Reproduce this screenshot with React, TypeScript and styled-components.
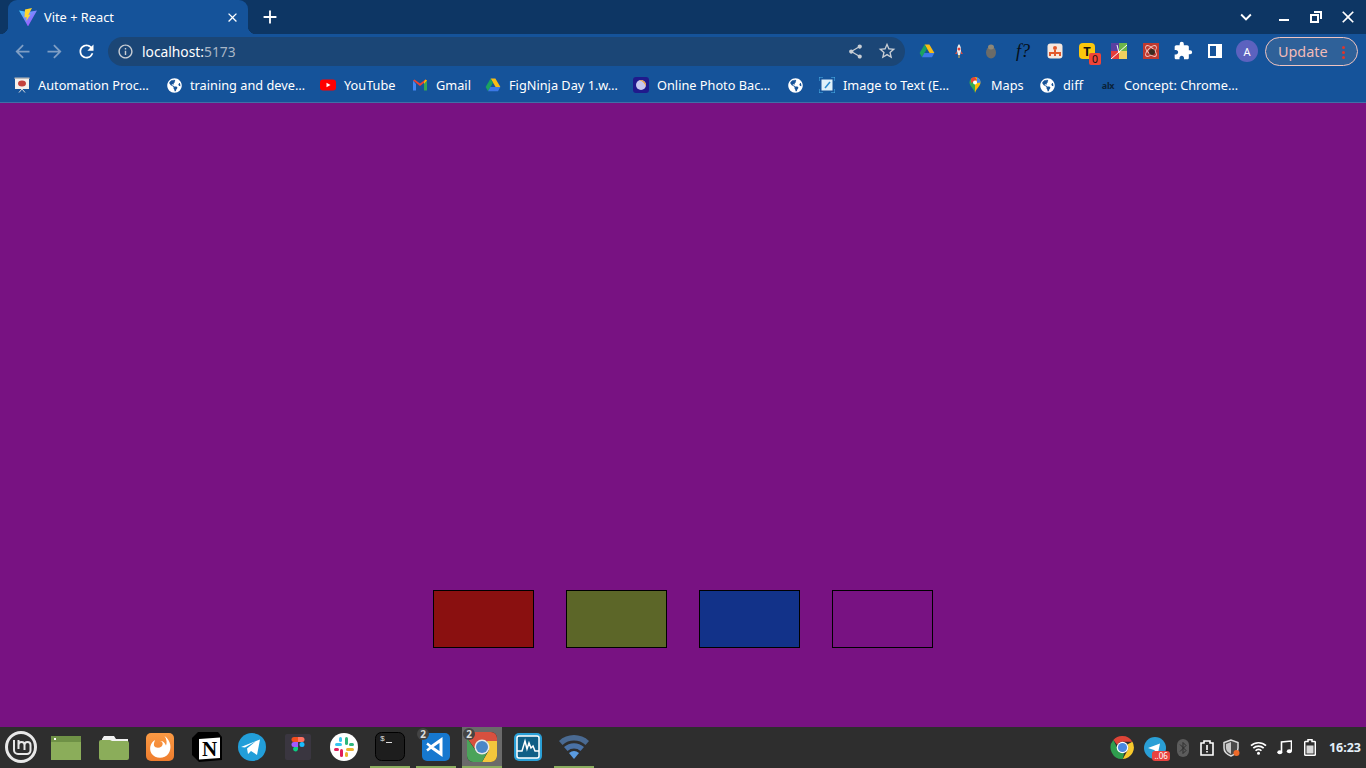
import React from 'react';
import styled, { createGlobalStyle } from 'styled-components';
import {
  MdAdd, MdArrowBack, MdArrowForward, MdClose, MdExpandMore, MdExtension,
  MdInfoOutline, MdRefresh, MdShare, MdStarBorder,
} from 'react-icons/md';
import { FaGlobeAmericas } from 'react-icons/fa';

const GlobalStyle = createGlobalStyle`
  html, body { margin: 0; padding: 0; height: 100%; overflow: hidden; }
  #root { height: 100%; }
`;

const Screen = styled.div`
  display: flex;
  flex-direction: column;
  width: 1366px;
  height: 768px;
  font-family: "Noto Sans", sans-serif;
  background: #781282;
`;

const TabStrip = styled.div`
  display: flex;
  align-items: flex-end;
  flex: 0 0 34px;
  padding-left: 8px;
  background: #0d3664;
`;

const Tab = styled.div`
  position: relative;
  display: flex;
  align-items: center;
  width: 240px;
  height: 34px;
  box-sizing: border-box;
  padding: 0 8px 0 11px;
  gap: 7px;
  background: #15539a;
  border-radius: 9px 9px 0 0;
  color: #fff;
  font-size: 12.8px;

  &::before, &::after {
    content: "";
    position: absolute;
    bottom: 0;
    width: 8px;
    height: 8px;
  }
  &::before { left: -8px; background: radial-gradient(circle at 0 0, transparent 8px, #15539a 8.5px); }
  &::after { right: -8px; background: radial-gradient(circle at 100% 0, transparent 8px, #15539a 8.5px); }
`;

const TabTitle = styled.span`
  flex: 1;
`;

const NewTab = styled.div`
  display: flex;
  align-items: center;
  justify-content: center;
  width: 28px;
  height: 34px;
  margin-left: 8px;
  color: #fff;
  font-size: 22px;
`;

const WindowButtons = styled.div`
  display: flex;
  align-items: center;
  height: 34px;
  margin-left: auto;
  padding-right: 2px;
  color: #fff;
`;

const WindowButton = styled.div<{ $gap?: number }>`
  display: flex;
  align-items: center;
  justify-content: center;
  width: 32px;
  height: 34px;
  margin-right: ${p => p.$gap ?? 0}px;
`;

const Toolbar = styled.div`
  display: flex;
  align-items: center;
  flex: 0 0 34px;
  padding: 0 8px 0 6px;
  background: #15539a;
`;

const NavButton = styled.div<{ $dim?: boolean }>`
  display: flex;
  align-items: center;
  justify-content: center;
  width: 32px;
  height: 32px;
  font-size: 21px;
  color: ${p => (p.$dim ? '#7f9ec4' : '#fff')};
`;

const Omnibox = styled.div`
  display: flex;
  align-items: center;
  width: 797px;
  height: 29px;
  margin-left: 6px;
  padding: 0 2px 0 9px;
  box-sizing: border-box;
  border-radius: 15px;
  background: #1b4676;
  color: #a9b6c6;
  font-size: 13.8px;
`;

const Url = styled.span`
  margin-left: 8px;
  flex: 1;
  span { color: #fff; }
`;

const OmniAction = styled.div`
  display: flex;
  align-items: center;
  justify-content: center;
  width: 32px;
  color: #c9ced4;
  font-size: 17px;
`;

const Extensions = styled.div`
  display: flex;
  align-items: center;
  margin-left: 6px;
`;

const ExtSlot = styled.div`
  position: relative;
  display: flex;
  align-items: center;
  justify-content: center;
  width: 32px;
  height: 32px;
  color: #fff;
  font-size: 20px;
`;

const FormulaIcon = styled.span`
  font-family: "Liberation Serif", serif;
  font-style: italic;
  font-size: 18px;
  color: #050f18;
`;

const TamperIcon = styled.div`
  display: flex;
  align-items: center;
  justify-content: center;
  width: 16px;
  height: 16px;
  border-radius: 4px;
  background: #fbc70d;
  color: #111;
  font-size: 13px;
  font-weight: 700;
`;

const TamperBadge = styled.span`
  position: absolute;
  right: 2px;
  bottom: 2px;
  width: 12px;
  height: 12px;
  border-radius: 2px;
  background: #f04438;
  color: #111;
  font-size: 10.5px;
  line-height: 12px;
  text-align: center;
`;

const Avatar = styled.div`
  display: flex;
  align-items: center;
  justify-content: center;
  width: 22px;
  height: 22px;
  border-radius: 50%;
  background: #5c62bf;
  color: #fff;
  font-size: 11px;
`;

const UpdateButton = styled.div`
  position: relative;
  display: flex;
  align-items: center;
  width: 93px;
  height: 29px;
  margin-left: 2px;
  padding-left: 12px;
  box-sizing: border-box;
  border: 1px solid #f0c4c0;
  border-radius: 15px;
  background: #2f6199;
  color: #f2bcb8;
  font-size: 14.4px;
`;

const KebabDots = styled.span`
  position: absolute;
  right: 12px;
  top: 8px;
  width: 3px;
  height: 3px;
  border-radius: 50%;
  background: #e0352b;
  box-shadow: 0 5px 0 #e0352b, 0 10px 0 #e0352b;
`;

const BookmarkBar = styled.div`
  display: flex;
  align-items: center;
  flex: 0 0 35px;
  padding-left: 14px;
  gap: 16px;
  box-sizing: border-box;
  background: #15539a;
  border-bottom: 1px solid #3f6fa6;
  color: #fff;
  font-size: 12.75px;
`;

const Bookmark = styled.div`
  display: flex;
  align-items: center;
  gap: 8px;
  white-space: nowrap;
`;

const BookmarkLabel = styled.span<{ $w: number }>`
  width: ${p => p.$w}px;
`;

const BookmarkIcon = styled.div`
  display: flex;
  align-items: center;
  justify-content: center;
  width: 16px;
  height: 16px;
  color: #fff;
  font-size: 15px;
`;

const AlxMark = styled.span`
  color: #0a2238;
  font-size: 9px;
  font-weight: 700;
  letter-spacing: -0.3px;
`;

const Page = styled.main`
  flex: 1;
  display: flex;
  align-items: flex-end;
  justify-content: center;
  gap: 32px;
  padding-bottom: 79px;
  background: #781282;
`;

const Swatch = styled.div<{ $color: string }>`
  width: 101px;
  height: 58px;
  box-sizing: border-box;
  border: 1px solid #000;
  background: ${p => p.$color};
`;

const Taskbar = styled.footer`
  display: flex;
  align-items: stretch;
  flex: 0 0 41px;
  background: #2e2e2e;
`;

const Dock = styled.div`
  display: flex;
  gap: 6px;
  padding-left: 2px;
`;

const DockItem = styled.div<{ $running?: boolean; $active?: boolean }>`
  position: relative;
  width: 40px;
  height: 41px;
  background: ${p => (p.$active ? '#6a6a6a' : 'transparent')};
  &::after {
    content: "";
    display: ${p => (p.$running ? 'block' : 'none')};
    position: absolute;
    left: 0;
    right: 0;
    bottom: 0;
    height: 2px;
    background: #8bad5f;
  }
`;

const CountBadge = styled.span`
  position: absolute;
  left: 1px;
  top: 1px;
  width: 12px;
  height: 12px;
  border-radius: 50%;
  background: #444;
  color: #ddd;
  font-size: 10px;
  font-weight: 700;
  line-height: 12px;
  text-align: center;
`;

const Tray = styled.div`
  display: flex;
  align-items: center;
  margin-left: auto;
  padding-right: 5px;
`;

const TraySlot = styled.div<{ $w: number }>`
  position: relative;
  display: flex;
  align-items: center;
  justify-content: center;
  width: ${p => p.$w}px;
  height: 41px;
`;

const TrayBadge = styled.span`
  position: absolute;
  right: 1px;
  bottom: 7px;
  padding: 0 2px;
  border-radius: 3px;
  background: #e8423f;
  color: #fff;
  font-size: 8px;
  line-height: 10px;
`;

const Clock = styled.div`
  margin-left: 5px;
  color: #e4eef8;
  font-size: 12.5px;
  font-weight: 700;
`;

const ChromeLogo = ({ size }: { size: number }) => (
  <svg width={size} height={size} viewBox="0 0 24 24">
    <path d="M12 1a11 11 0 0 1 9.5 5.5H12a5.500 5.500 0 0 0-5 3L3.200 4.900A11 11 0 0 1 12 1z" fill="#de4437" />
    <path d="M21.500 6.500A11 11 0 0 1 12.300 23l4.500-8.200A5.500 5.500 0 0 0 16.500 9l5-2.500z" fill="#f8c92c" />
    <path d="M3.200 4.900 7.600 14a5.500 5.500 0 0 0 6 3.300L12.300 23A11 11 0 0 1 3.200 4.900z" fill="#2f9e4e" />
    <circle cx="12" cy="12" r="5.600" fill="#fff" />
    <circle cx="12" cy="12" r="4.400" fill="#4a88e0" />
  </svg>
);

const DriveLogo = ({ size }: { size: number }) => (
  <svg width={size} height={size} viewBox="0 0 16 16">
    <path d="M5.600 1.500h4.800l5 8.600h-4.800z" fill="#f9bc15" />
    <path d="M5.600 1.500 .6 10.100l2.400 4.200 5-8.600z" fill="#1ba261" />
    <path d="M3 14.300h10l2.400-4.200H5.400z" fill="#3c78e6" />
  </svg>
);

const Globe = () => <FaGlobeAmericas />;

const bookmarks: { label: string; width: number; icon: React.ReactNode }[] = [
  {
    label: 'Automation Proc…',
    width: 112,
    icon: (
      <svg width="16" height="16" viewBox="0 0 16 16">
        <rect x="1" y="1" width="14" height="11" fill="#f4f0ec" />
        <rect x="0.500" y="0.500" width="15" height="1.500" fill="#bbb" />
        <ellipse cx="8" cy="6.500" rx="4" ry="3" fill="#c3413c" />
        <path d="M8 12 5 15.500M8 12l3 3.500" stroke="#ddd" fill="none" />
      </svg>
    ),
  },
  { label: 'training and deve…', width: 114, icon: <Globe /> },
  {
    label: 'YouTube',
    width: 52,
    icon: (
      <svg width="16" height="16" viewBox="0 0 16 16">
        <rect y="2.500" width="16" height="11" rx="3" fill="#f00" />
        <path d="M6.500 5.800 10.500 8l-4 2.200z" fill="#fff" />
      </svg>
    ),
  },
  {
    label: 'Gmail',
    width: 33,
    icon: (
      <svg width="16" height="16" viewBox="0 0 16 16">
        <path d="M1 3.500v10h3V7z" fill="#4285f4" />
        <path d="M15 3.500v10h-3V7z" fill="#34a853" />
        <path d="M1 3.500 8 9l7-5.500-1.500-1L8 6.500 2.500 2.500z" fill="#ea4335" />
        <path d="M12 7V4.500l1.500-2L15 3.500z" fill="#fbbc04" />
      </svg>
    ),
  },
  { label: 'FigNinja Day 1.w…', width: 108, icon: <DriveLogo size={16} /> },
  {
    label: 'Online Photo Bac…',
    width: 114,
    icon: (
      <svg width="16" height="16" viewBox="0 0 16 16">
        <rect width="16" height="16" rx="3" fill="#201a8c" />
        <circle cx="8" cy="8" r="5" fill="#c8c8f0" />
        <path d="M6 3.500a5 5 0 0 1 6.500 6.500A7 7 0 0 0 6 3.500z" fill="#f0a23c" />
      </svg>
    ),
  },
  { label: '', width: 0, icon: <Globe /> },
  {
    label: 'Image to Text (E…',
    width: 108,
    icon: (
      <svg width="16" height="16" viewBox="0 0 16 16">
        <rect x="2.500" y="2.500" width="11" height="11" fill="#dff0fa" />
        <path d="M0 4V0h4M12 0h4v4M16 12v4h-4M4 16H0v-4" stroke="#4db4ea" fill="none" />
        <path d="M6 11l5-6" stroke="#2a8ad0" strokeWidth="1.500" />
      </svg>
    ),
  },
  {
    label: 'Maps',
    width: 32,
    icon: (
      <svg width="16" height="16" viewBox="0 0 16 16">
        <path d="M8 0a5.500 5.500 0 0 1 5.500 5.500c0 3.500-4 5.500-5.500 10.500z" fill="#fbbc04" />
        <path d="M8 0a5.500 5.500 0 0 0-5.500 5.500C2.500 9 6.500 11 8 16z" fill="#34a853" />
        <path d="M4 1.500A5.500 5.500 0 0 1 8 0l2 3-6 3z" fill="#ea4335" />
        <path d="M10 .5a5.500 5.500 0 0 1 3.500 5L10 6z" fill="#4285f4" />
        <circle cx="8" cy="5.500" r="2" fill="#fff" />
      </svg>
    ),
  },
  { label: 'diff', width: 21, icon: <Globe /> },
  { label: 'Concept: Chrome…', width: 114, icon: <AlxMark>alx</AlxMark> },
];

type DockEntry = { art: React.ReactNode; running?: boolean; active?: boolean; count?: string };

const dockEntries: DockEntry[] = [
  {
    art: (
      <svg width="40" height="41" viewBox="0 0 40 41">
        <circle cx="19" cy="20" r="14.500" fill="none" stroke="#e8e8e8" strokeWidth="3" />
        <path d="M12 13v10a4 4 0 0 0 4 4h9a3.500 3.500 0 0 0 3.500-3.500V18a3 3 0 0 0-6 0v5M16.500 13v9M16.500 18a3 3 0 0 1 6 0" fill="none" stroke="#e8e8e8" strokeWidth="2" />
      </svg>
    ),
  },
  {
    art: (
      <svg width="40" height="41" viewBox="0 0 40 41">
        <rect x="3" y="9" width="30" height="24" fill="#8bad5a" />
        <rect x="3" y="9" width="30" height="6" fill="#6f9146" />
        <rect x="6" y="11" width="2" height="2" fill="#fff" />
      </svg>
    ),
  },
  {
    art: (
      <svg width="40" height="41" viewBox="0 0 40 41">
        <path d="M8 12l2-3h10l2 3h12v3H8z" fill="#f2f2f2" />
        <path d="M5 15a2 2 0 0 1 2-2h9l2 1h15a2 2 0 0 1 2 2v15a2 2 0 0 1-2 2H7a2 2 0 0 1-2-2z" fill="#8bad5a" />
      </svg>
    ),
  },
  {
    art: (
      <svg width="40" height="41" viewBox="0 0 40 41">
        <defs>
          <linearGradient id="fx" x1="0" y1="0" x2="0" y2="1">
            <stop offset="0" stopColor="#fb9a44" />
            <stop offset="1" stopColor="#ee7d2e" />
          </linearGradient>
        </defs>
        <rect x="6" y="6" width="28" height="28" rx="5" fill="url(#fx)" />
        <path d="M15 13c-5 3-6 9-3.500 13.500 3.500 5.500 13 6 17 0 3.500-5 2.500-13-4-17.500 2.500 3.500 2.500 7 1.500 9.500-1-3-3.500-5-6-4.500 3 .5 3.500 3.500 1.500 5.500-2.500 2-6.500 1.500-7.500-1-.5-2 .5-3.500 1-5.500z" fill="#fff" />
      </svg>
    ),
  },
  {
    art: (
      <svg width="40" height="41" viewBox="0 0 40 41">
        <path d="M6 11 12 5 32 5l4 5v23l-23 2-7-7z" fill="#000" />
        <path d="M13 12l21-1.500V31l-21 1.500z" fill="#fff" />
        <text x="23.500" y="29" textAnchor="middle" fontFamily="Liberation Serif, serif" fontWeight="700" fontSize="21" fill="#000">N</text>
      </svg>
    ),
  },
  {
    art: (
      <svg width="40" height="41" viewBox="0 0 40 41">
        <circle cx="20" cy="20" r="14" fill="#229ed9" />
        <path d="M9 20 28 12.500 25 28l-6-4-3 3-1-5.500 9-7.500-11 6.500z" fill="#fff" />
      </svg>
    ),
  },
  {
    art: (
      <svg width="40" height="41" viewBox="0 0 40 41">
        <g transform="translate(2 0)">
          <rect x="5" y="7" width="26" height="26" rx="2" fill="#3a3640" />
          <path d="M14 10h4v5h-4a2.500 2.500 0 0 1 0-5z" fill="#f24e1e" />
          <path d="M18 10h4a2.500 2.500 0 0 1 0 5h-4z" fill="#ff7262" />
          <path d="M14 15h4v5h-4a2.500 2.500 0 0 1 0-5z" fill="#a259ff" />
          <circle cx="22" cy="17.500" r="2.500" fill="#1abcfe" />
          <path d="M14 20h4v2.500a2.500 2.500 0 1 1-4-2.500z" fill="#0acf83" />
        </g>
      </svg>
    ),
  },
  {
    art: (
      <svg width="40" height="41" viewBox="0 0 40 41">
        <circle cx="20" cy="20" r="14" fill="#fff" />
        <rect x="11" y="16" width="7" height="3" rx="1.500" fill="#36c5f0" />
        <rect x="15" y="10" width="3" height="5" rx="1.500" fill="#36c5f0" />
        <rect x="21" y="10" width="3" height="8" rx="1.500" fill="#2eb67d" />
        <rect x="25" y="16" width="5" height="3" rx="1.500" fill="#2eb67d" />
        <rect x="22" y="21" width="8" height="3" rx="1.500" fill="#ecb22e" />
        <rect x="21" y="25" width="3" height="5" rx="1.500" fill="#ecb22e" />
        <rect x="16" y="22" width="3" height="8" rx="1.500" fill="#e01e5a" />
        <rect x="10" y="21" width="5" height="3" rx="1.500" fill="#e01e5a" />
      </svg>
    ),
  },
  {
    running: true,
    art: (
      <svg width="40" height="41" viewBox="0 0 40 41">
        <rect x="5.500" y="5.500" width="29" height="28" rx="6" fill="#1d1d1d" stroke="#000" />
        <text x="10" y="14" fontFamily="Liberation Mono, monospace" fontSize="8" fill="#ddd">$</text>
        <rect x="16" y="15" width="6" height="1" fill="#ddd" />
      </svg>
    ),
  },
  {
    running: true,
    count: '2',
    art: (
      <svg width="40" height="41" viewBox="0 0 40 41">
        <rect x="6" y="6" width="28" height="28" rx="5" fill="#1678cf" />
        <path d="M25 13v14l-10-7z" fill="none" stroke="#fff" strokeWidth="3" />
        <path d="M11 16.500l4.500 3.500-4.500 3.500" fill="none" stroke="#fff" strokeWidth="2.500" />
      </svg>
    ),
  },
  {
    running: true,
    active: true,
    count: '2',
    art: (
      <svg width="40" height="41" viewBox="0 0 40 41">
        <rect x="5" y="5" width="30" height="30" rx="6" fill="#222" />
        <path d="M5 11a6 6 0 0 1 6-6h18a6 6 0 0 1 6 6v3H19l-6 8z" fill="#d8503f" />
        <path d="M35 14v15a6 6 0 0 1-6 6h-9l7-12-2-9z" fill="#f4c63c" />
        <path d="M5 11v18a6 6 0 0 0 6 6h9l6-11H14z" fill="#4ba35a" />
        <circle cx="20" cy="20" r="7.500" fill="#e8e8e8" />
        <circle cx="20" cy="20" r="6" fill="#4a86c8" />
      </svg>
    ),
  },
  {
    art: (
      <svg width="40" height="41" viewBox="0 0 40 41">
        <rect x="6" y="6" width="28" height="28" rx="5" fill="#2a9fd6" />
        <rect x="9" y="9" width="22" height="22" rx="2" fill="#0f5e86" stroke="#fff" strokeWidth="1.500" />
        <path d="M9 24h5l3-10 2 8 2-6 2 5 2-2 2 5h4" fill="none" stroke="#fff" strokeWidth="1.500" />
      </svg>
    ),
  },
  {
    running: true,
    art: (
      <svg width="40" height="41" viewBox="0 0 40 41">
        <path d="M5 14a22 22 0 0 1 30 0l-3.500 4a17 17 0 0 0-23 0z" fill="#4a6a92" />
        <path d="M10 20a15 15 0 0 1 20 0l-3.500 4a10 10 0 0 0-13 0z" fill="#4a72a6" />
        <path d="M15 26a8 8 0 0 1 10 0l-5 6z" fill="#5a9be0" />
      </svg>
    ),
  },
];

const ViteLogo = () => (
  <svg width="18" height="18" viewBox="0 0 18 18">
    <defs>
      <linearGradient id="vg" x1="0" y1="0" x2="1" y2="1">
        <stop offset="0" stopColor="#41d1ff" />
        <stop offset="1" stopColor="#bd34fe" />
      </linearGradient>
    </defs>
    <path d="M0 2.500 9 4l9-1.500L9.500 17.500a.5.5 0 0 1-1 0z" fill="url(#vg)" />
    <path d="M13 0 6 1.500 5.500 9.500l2.200-.5-.5 4L11.500 6.500 9.300 7z" fill="#ffd62e" />
  </svg>
);

const WindowControls = () => (
  <WindowButtons>
    <WindowButton $gap={6}><MdExpandMore size={22} /></WindowButton>
    <WindowButton>
      <svg width="12" height="12" viewBox="0 0 12 12"><rect x="1" y="8" width="10" height="2" fill="#fff" /></svg>
    </WindowButton>
    <WindowButton>
      <svg width="12" height="12" viewBox="0 0 12 12" fill="none" stroke="#fff" strokeWidth="2">
        <rect x="1" y="4" width="7" height="7" />
        <path d="M4 1h7v7" />
      </svg>
    </WindowButton>
    <WindowButton><MdClose size={20} /></WindowButton>
  </WindowButtons>
);

export default function App() {
  return (
    <Screen>
      <GlobalStyle />
      <TabStrip>
        <Tab>
          <ViteLogo />
          <TabTitle>Vite + React</TabTitle>
          <MdClose size={15} />
        </Tab>
        <NewTab><MdAdd /></NewTab>
        <WindowControls />
      </TabStrip>

      <Toolbar>
        <NavButton $dim><MdArrowBack /></NavButton>
        <NavButton $dim><MdArrowForward /></NavButton>
        <NavButton><MdRefresh /></NavButton>
        <Omnibox>
          <MdInfoOutline size={17} color="#c9ced4" />
          <Url><span>localhost:</span>5173</Url>
          <OmniAction><MdShare /></OmniAction>
          <OmniAction><MdStarBorder size={20} /></OmniAction>
        </Omnibox>
        <Extensions>
          <ExtSlot><DriveLogo size={16} /></ExtSlot>
          <ExtSlot>
            <svg width="16" height="16" viewBox="0 0 16 16">
              <path d="M8 1c2 2 2 5 2 7l-1 4H7L6 8c0-2 0-5 2-7z" fill="#eee" />
              <path d="M6 8 4 11h2zM10 8l2 3h-2z" fill="#d9483f" />
              <circle cx="8" cy="6" r="1.500" fill="#e0403a" />
              <path d="M7.500 12h1v3h-1z" fill="#f2b63c" />
            </svg>
          </ExtSlot>
          <ExtSlot>
            <svg width="16" height="16" viewBox="0 0 16 16">
              <ellipse cx="8" cy="9.500" rx="5" ry="6" fill="#6b6b68" />
              <ellipse cx="8" cy="4" rx="3" ry="2.500" fill="#8d8778" />
            </svg>
          </ExtSlot>
          <ExtSlot><FormulaIcon>f?</FormulaIcon></ExtSlot>
          <ExtSlot>
            <svg width="16" height="16" viewBox="0 0 16 16">
              <rect x=".5" y=".5" width="15" height="15" rx="3" fill="#f6e7de" />
              <circle cx="8" cy="5" r="2" fill="#e2582c" />
              <path d="M3 13v-3h10v3M8 7v6" stroke="#e2582c" strokeWidth="2" fill="none" />
            </svg>
          </ExtSlot>
          <ExtSlot><TamperIcon>T</TamperIcon><TamperBadge>0</TamperBadge></ExtSlot>
          <ExtSlot>
            <svg width="16" height="16" viewBox="0 0 16 16">
              <rect width="16" height="16" fill="#f0d060" />
              <path d="M0 0h8v8H0z" fill="#5b3fa0" />
              <path d="M8 0h8v8H8z" fill="#6cb548" />
              <path d="M0 8h8v8H0z" fill="#e23b3b" />
              <path d="M0 16 16 2M6 2l2 8" stroke="#fff" />
            </svg>
          </ExtSlot>
          <ExtSlot>
            <svg width="16" height="16" viewBox="0 0 16 16">
              <rect width="16" height="16" fill="#c0392f" />
              <ellipse cx="8" cy="8" rx="7" ry="3" fill="none" stroke="#f3c5c0" transform="rotate(45 8 8)" />
              <ellipse cx="8" cy="8" rx="7" ry="3" fill="none" stroke="#f3c5c0" transform="rotate(-45 8 8)" />
              <circle cx="9" cy="9" r="3" fill="#3a2a20" />
            </svg>
          </ExtSlot>
          <ExtSlot><MdExtension /></ExtSlot>
          <ExtSlot>
            <svg width="14" height="14" viewBox="0 0 14 14">
              <path d="M0 0h14v14H0zM2 2v10h6V2z" fill="#fff" fillRule="evenodd" />
            </svg>
          </ExtSlot>
          <ExtSlot><Avatar>A</Avatar></ExtSlot>
        </Extensions>
        <UpdateButton>Update<KebabDots /></UpdateButton>
      </Toolbar>

      <BookmarkBar>
        {bookmarks.map((b, i) => (
          <Bookmark key={i}>
            <BookmarkIcon>{b.icon}</BookmarkIcon>
            {b.label && <BookmarkLabel $w={b.width}>{b.label}</BookmarkLabel>}
          </Bookmark>
        ))}
      </BookmarkBar>

      <Page>
        <Swatch $color="#8a1010" />
        <Swatch $color="#5c6628" />
        <Swatch $color="#123289" />
        <Swatch $color="transparent" />
      </Page>

      <Taskbar>
        <Dock>
          {dockEntries.map((d, i) => (
            <DockItem key={i} $running={d.running} $active={d.active}>
              {d.art}
              {d.count && <CountBadge>{d.count}</CountBadge>}
            </DockItem>
          ))}
        </Dock>
        <Tray>
          <TraySlot $w={32}><ChromeLogo size={25} /></TraySlot>
          <TraySlot $w={32}>
            <svg width="22" height="22" viewBox="0 0 22 22">
              <circle cx="11" cy="11" r="11" fill="#2a9fd6" />
              <path d="M4 11 16 6.500 14 16l-4-3z" fill="#fff" />
            </svg>
            <TrayBadge>..06</TrayBadge>
          </TraySlot>
          <TraySlot $w={24}>
            <svg width="12" height="18" viewBox="0 0 12 18">
              <rect width="12" height="18" rx="6" fill="#5c5c5c" />
              <path d="M3 5.500l6 6-3 3v-11l3 3-6 6" fill="none" stroke="#2e2e2e" />
            </svg>
          </TraySlot>
          <TraySlot $w={25}>
            <svg width="14" height="16" viewBox="0 0 14 16">
              <path d="M1 3h3V1h6v2h3v12H1z" fill="none" stroke="#fff" strokeWidth="1.600" />
              <path d="M6.200 5h1.600v5H6.200zM6.200 11h1.600v1.600H6.200z" fill="#fff" />
            </svg>
          </TraySlot>
          <TraySlot $w={25}>
            <svg width="18" height="18" viewBox="0 0 18 18">
              <path d="M8 1 1 3.500V9c0 4 3 6.500 7 8 4-1.500 7-4 7-8V3.500z" fill="#4a4a4a" stroke="#dcdcdc" strokeWidth="1.500" />
              <path d="M8 3 3 5v4c0 2.500 2 4.500 5 6z" fill="#c8c8c8" />
              <circle cx="13.500" cy="14" r="3" fill="#ee6a2a" />
            </svg>
          </TraySlot>
          <TraySlot $w={27}>
            <svg width="17" height="14" viewBox="0 0 17 14">
              <path d="M1 4.700a11 11 0 0 1 15 0M3.300 7.200a7.500 7.500 0 0 1 10.400 0M5.600 9.700a3.800 3.800 0 0 1 5.800 0" fill="none" stroke="#fff" strokeWidth="1.700" />
              <circle cx="8.500" cy="12.300" r="1.500" fill="#fff" />
            </svg>
          </TraySlot>
          <TraySlot $w={25}>
            <svg width="15" height="15" viewBox="0 0 15 15">
              <path d="M4.500 12V2l10-1v10" fill="none" stroke="#fff" strokeWidth="1.600" />
              <ellipse cx="2.800" cy="12.300" rx="2.500" ry="2" fill="#fff" />
              <ellipse cx="12.300" cy="11.300" rx="2.500" ry="2" fill="#fff" />
            </svg>
          </TraySlot>
          <TraySlot $w={27}>
            <svg width="12" height="17" viewBox="0 0 12 17">
              <path d="M4 .8h4v1.700h2.500a.8.800 0 0 1 .8.800v12.100a.8.800 0 0 1-.8.800h-9a.8.800 0 0 1-.8-.8V3.300a.8.800 0 0 1 .8-.8H4z" fill="none" stroke="#fff" strokeWidth="1.500" />
              <rect x="2.500" y="6.500" width="7" height="8" fill="#d8d8d8" />
            </svg>
          </TraySlot>
          <Clock>16:23</Clock>
        </Tray>
      </Taskbar>
    </Screen>
  );
}
